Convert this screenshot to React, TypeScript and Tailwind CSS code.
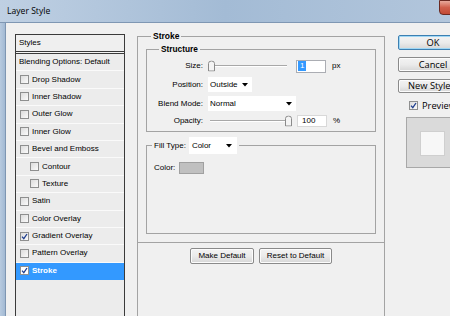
import React from "react";

const SANS = "font-[family-name:'Liberation_Sans',Arial,sans-serif]";

function Check({ checked = false, white = false }: { checked?: boolean; white?: boolean }) {
  return (
    <span
      className={`w-[9px] h-[9px] shrink-0 border border-[#8e8f8f] flex items-center justify-center ${
        white ? "bg-white" : "bg-linear-to-br from-[#dcdcdc] to-[#fbfbfb]"
      }`}
    >
      {checked && (
        <svg width="7" height="7" viewBox="0 0 7 7">
          <path d="M1 3.6 L2.8 5.6 L6 1" fill="none" stroke="#1f3f8f" strokeWidth="1.3" />
        </svg>
      )}
    </span>
  );
}

function Arrow() {
  return (
    <svg width="6" height="4" viewBox="0 0 6 4">
      <path d="M0 0 L6 0 L3 3.5 Z" fill="#000" />
    </svg>
  );
}

function Slider({ width, thumb }: { width: number; thumb: "left" | "right" }) {
  return (
    <div className="relative h-full flex items-center" style={{ width }}>
      <div className="w-full h-[2px] border-t border-[#a8a8a8] border-b border-b-white" />
      <svg
        width="7"
        height="11"
        viewBox="0 0 7 11"
        className={`absolute top-1/2 -translate-y-1/2 ${thumb === "left" ? "left-[0px]" : "right-[-3px]"}`}
      >
        <path d="M0.5 3 Q0.5 0.5 3.5 0.5 Q6.5 0.5 6.5 3 L6.5 10.5 L0.5 10.5 Z" fill="#f4f4f4" stroke="#8a8a8a" />
      </svg>
    </div>
  );
}

function Btn({ children, w, primary = false }: { children: React.ReactNode; w: string; primary?: boolean }) {
  return (
    <div
      className={`${w} h-full rounded-[2px] border ${
        primary ? "border-[#3c7fb1] shadow-[inset_0_0_0_1px_#9fd7f5]" : "border-[#8a8a8a] shadow-[inset_0_0_0_1px_#fcfcfc]"
      } bg-linear-to-b from-[#f3f3f3] via-[#ebebeb] to-[#d6d6d6] flex items-center justify-center text-black whitespace-nowrap`}
    >
      {children}
    </div>
  );
}

const rows: { label: string; indent?: boolean; checked?: boolean; selected?: boolean }[] = [
  { label: "Drop Shadow" },
  { label: "Inner Shadow" },
  { label: "Outer Glow" },
  { label: "Inner Glow" },
  { label: "Bevel and Emboss" },
  { label: "Contour", indent: true },
  { label: "Texture", indent: true },
  { label: "Satin" },
  { label: "Color Overlay" },
  { label: "Gradient Overlay", checked: true },
  { label: "Pattern Overlay" },
  { label: "Stroke", checked: true, selected: true },
];

export default function App() {
  return (
    <div className={`w-[450px] h-[316px] overflow-hidden relative bg-[#f0f0f0] ${SANS} text-[8px] text-black`}>
      {/* Title bar */}
      <div className="h-[23px] bg-linear-to-r from-[#bfd0e3] via-[#a3bbd5] to-[#b2c6dc] flex items-center pl-[7px] border-b border-[#7f97b3]">
        <span className="font-[family-name:'Open_Sans',sans-serif] text-[8.6px] text-black">Layer Style</span>
      </div>
      <div className="absolute right-[-14px] top-0 w-[25px] h-[15px] rounded-bl-[4px] border border-[#6b2a22] bg-linear-to-b from-[#e8a99c] via-[#d0604c] to-[#c24a35]" />

      <div className="flex h-[293px] w-[450px]">
        {/* left frame */}
        <div className="w-[6px] shrink-0 h-full bg-linear-to-r from-[#b7cadf] to-[#a2b9d3] border-r border-[#7e96b2]" />

        {/* body */}
        <div className="flex-1 min-w-0 overflow-hidden flex items-start pl-[9px] pt-[7px]">
          {/* Styles list */}
          <div className="mt-[4px] w-[110px] shrink-0 h-[300px] border border-[#3a3a3a] bg-[#ececec]">
            <div className="h-[16px] flex items-center pl-[3px] bg-[#efefef]">Styles</div>
            <div className="h-[3px] border-y border-[#3a3a3a] bg-[#f4f4f4]" />
            <div className="h-[17.4px] flex items-center pl-[3px] border-b border-[#fafafa]">Blending Options: Default</div>
            {rows.map((r) => (
              <div
                key={r.label}
                className={`h-[17.4px] flex items-center gap-[3px] border-b ${
                  r.selected ? "bg-[#3399ff] text-white font-bold border-[#3399ff]" : "border-[#fafafa]"
                } ${r.indent ? "pl-[14px]" : "pl-[4px]"}`}
              >
                <Check checked={r.checked} white={r.selected} />
                <span>{r.label}</span>
              </div>
            ))}
          </div>

          {/* Middle panel */}
          <fieldset className="ml-[12px] w-[248px] shrink-0 h-[320px] border border-[#a3a3a3] px-0">
            <legend className="ml-[13px] px-[2px] font-bold text-[8.5px] leading-[12px]">Stroke</legend>
            <div className="px-[8px] pb-[8px] border-b border-[#a3a3a3]">
              {/* Structure */}
              <fieldset className="mt-[1px] border border-[#a3a3a3] px-0 pb-[4px]">
                <legend className="ml-[12px] px-[2px] font-bold text-[8.3px] leading-[12px]">Structure</legend>
                <div className="mt-[4px] h-[14px] flex items-center">
                  <span className="w-[56px] text-right">Size:</span>
                  <div className="ml-[5px] h-full">
                    <Slider width={79} thumb="left" />
                  </div>
                  <div className="ml-[9px] w-[30px] h-[13px] bg-white border border-[#abadb3] flex items-center pl-[1px]">
                    <span className="bg-[#3399ff] text-white px-[2px] leading-[10px]">1</span>
                  </div>
                  <span className="ml-[6px]">px</span>
                </div>
                <div className="mt-[4px] h-[15px] flex items-center">
                  <span className="w-[56px] text-right">Position:</span>
                  <div className="ml-[5px] w-[44px] h-full bg-white flex items-center justify-between pl-[2px] pr-[4px]">
                    <span>Outside</span>
                    <Arrow />
                  </div>
                </div>
                <div className="mt-[4px] h-[15px] flex items-center">
                  <span className="w-[56px] text-right">Blend Mode:</span>
                  <div className="ml-[5px] w-[88px] h-full bg-white flex items-center justify-between pl-[2px] pr-[4px]">
                    <span>Normal</span>
                    <Arrow />
                  </div>
                </div>
                <div className="mt-[3px] h-[13px] flex items-center">
                  <span className="w-[56px] text-right">Opacity:</span>
                  <div className="ml-[7px] h-full">
                    <Slider width={79} thumb="right" />
                  </div>
                  <div className="ml-[8px] w-[30px] h-[12px] bg-white border border-[#d8d8d8] flex items-center pl-[4px]">
                    100
                  </div>
                  <span className="ml-[6px]">%</span>
                </div>
              </fieldset>

              {/* Fill Type */}
              <fieldset className="mt-[5px] h-[97px] border border-[#a3a3a3] px-0">
                <legend className="ml-[5px] px-[2px] flex items-center gap-[3px] h-[17px]">
                  <span>Fill Type:</span>
                  <div className="w-[48px] h-[17px] bg-white flex items-center justify-between pl-[3px] pr-[5px]">
                    <span>Color</span>
                    <Arrow />
                  </div>
                </legend>
                <div className="mt-[8px] h-[12px] flex items-center pl-[7px] gap-[4px]">
                  <span>Color:</span>
                  <div className="w-[25px] h-[12px] bg-[#c0c0c0] border border-[#a0a0a0]" />
                </div>
              </fieldset>
            </div>
            <div className="mt-[5px] h-[16px] flex pl-[52px] gap-[5px]">
              <Btn w="w-[64px]">Make Default</Btn>
              <Btn w="w-[73px]">Reset to Default</Btn>
            </div>
          </fieldset>

          {/* Right column */}
          <div className="ml-[13px] mt-[5px] w-[70px] shrink-0 flex flex-col text-[9.3px] font-[family-name:'Open_Sans',sans-serif]">
            <div className="h-[15px]">
              <Btn w="w-[70px]" primary>
                OK
              </Btn>
            </div>
            <div className="mt-[7px] h-[15px]">
              <Btn w="w-[70px]">Cancel</Btn>
            </div>
            <div className="mt-[7px] h-[14px]">
              <Btn w="w-[70px]">New Style...</Btn>
            </div>
            <div className="mt-[8px] h-[9px] flex items-center pl-[11px] gap-[4px]">
              <Check checked />
              <span>Preview</span>
            </div>
            <div className="mt-[7px] ml-[8px] w-[70px] h-[51px] bg-[#dadada] border border-[#a8a8a8] pl-[13px] pt-[13px]">
              <div className="w-[25px] h-[25px] bg-[#f7f7f7] border border-[#cfcfcf]" />
            </div>
          </div>
        </div>
      </div>
    </div>
  );
}
